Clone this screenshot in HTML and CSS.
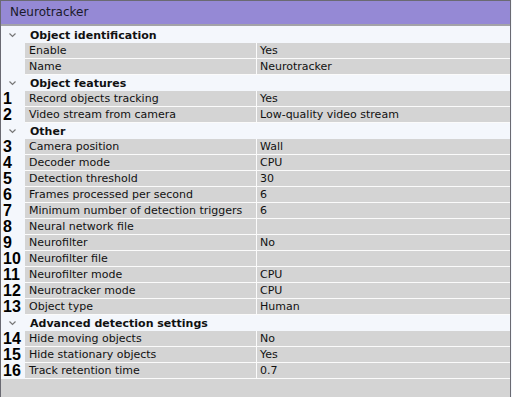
FILE: index.html
```html
<!DOCTYPE html>
<html lang="en">
<head>
    <meta charset="UTF-8">
    <title>Neurotracker</title>
    <link rel="stylesheet" href="styles.css">
</head>
<body>
    <div class="panel">
        <div class="title">Neurotracker</div>

        <div class="list">
            <div class="group">
                <svg class="chev" width="7" height="5" viewBox="0 0 7 5"><polyline points="0.5,0.5 3.5,3.5 6.5,0.5" /></svg>
                <span>Object identification</span>
            </div>
            <div class="row"><span class="num"></span><span class="label">Enable</span><span class="value">Yes</span></div>
            <div class="row"><span class="num"></span><span class="label">Name</span><span class="value">Neurotracker</span></div>

            <div class="group">
                <svg class="chev" width="7" height="5" viewBox="0 0 7 5"><polyline points="0.5,0.5 3.5,3.5 6.5,0.5" /></svg>
                <span>Object features</span>
            </div>
            <div class="row"><span class="num">1</span><span class="label">Record objects tracking</span><span class="value">Yes</span></div>
            <div class="row"><span class="num">2</span><span class="label">Video stream from camera</span><span class="value">Low-quality video stream</span></div>

            <div class="group">
                <svg class="chev" width="7" height="5" viewBox="0 0 7 5"><polyline points="0.5,0.5 3.5,3.5 6.5,0.5" /></svg>
                <span>Other</span>
            </div>
            <div class="row"><span class="num">3</span><span class="label">Camera position</span><span class="value">Wall</span></div>
            <div class="row"><span class="num">4</span><span class="label">Decoder mode</span><span class="value">CPU</span></div>
            <div class="row"><span class="num">5</span><span class="label">Detection threshold</span><span class="value">30</span></div>
            <div class="row"><span class="num">6</span><span class="label">Frames processed per second</span><span class="value">6</span></div>
            <div class="row"><span class="num">7</span><span class="label">Minimum number of detection triggers</span><span class="value">6</span></div>
            <div class="row"><span class="num">8</span><span class="label">Neural network file</span><span class="value"></span></div>
            <div class="row"><span class="num">9</span><span class="label">Neurofilter</span><span class="value">No</span></div>
            <div class="row"><span class="num">10</span><span class="label">Neurofilter file</span><span class="value"></span></div>
            <div class="row"><span class="num">11</span><span class="label">Neurofilter mode</span><span class="value">CPU</span></div>
            <div class="row"><span class="num">12</span><span class="label">Neurotracker mode</span><span class="value">CPU</span></div>
            <div class="row"><span class="num">13</span><span class="label">Object type</span><span class="value">Human</span></div>

            <div class="group">
                <svg class="chev" width="7" height="5" viewBox="0 0 7 5"><polyline points="0.5,0.5 3.5,3.5 6.5,0.5" /></svg>
                <span>Advanced detection settings</span>
            </div>
            <div class="row"><span class="num">14</span><span class="label">Hide moving objects</span><span class="value">No</span></div>
            <div class="row"><span class="num">15</span><span class="label">Hide stationary objects</span><span class="value">Yes</span></div>
            <div class="row"><span class="num">16</span><span class="label">Track retention time</span><span class="value">0.7</span></div>
        </div>
    </div>
</body>
</html>
```

FILE: styles.css
```css
body {
    margin: 0;
    padding: 0;
    background-color: #f4f7fc;
    font-family: "DejaVu Sans", Verdana, sans-serif;
    font-size: 11px;
    color: #111;
}
.panel {
    width: 509px;
    height: 396px;
    border: 1px solid #6a6a72;
    border-bottom: none;
    background-color: #d4d4d4;
    overflow: hidden;
}
.title {
    height: 23px;
    line-height: 23px;
    padding-left: 9px;
    background-color: #9589d5;
    border-bottom: 2px solid #a3a3a8;
    font-size: 12px;
    color: #1a1a2a;
}
.list {
    padding-top: 1px;
    background-color: #f4f7fc;
}
.group {
    display: flex;
    align-items: center;
    height: 16px;
    background-color: #f4f7fc;
    font-weight: bold;
}
.chev {
    margin: 1px 14px 0 8px;
}
.chev polyline {
    fill: none;
    stroke: #777;
    stroke-width: 1.2;
}
.row {
    display: grid;
    grid-template-columns: 24px 231px 1fr;
    height: 15px;
    line-height: 16px;
    border-bottom: 1px solid #fbfbfb;
    background-color: #d4d4d4;
}
.num {
    background-color: #f4f7fc;
    padding-left: 2px;
    font-family: "Liberation Sans", Arial, sans-serif;
    font-weight: bold;
    font-size: 16px;
    line-height: 15px;
    color: #000;
    white-space: nowrap;
    overflow: visible;
}
.label {
    padding-left: 4px;
    white-space: nowrap;
}
.value {
    padding-left: 3px;
    border-left: 1px solid #fbfbfb;
    white-space: nowrap;
}
```
